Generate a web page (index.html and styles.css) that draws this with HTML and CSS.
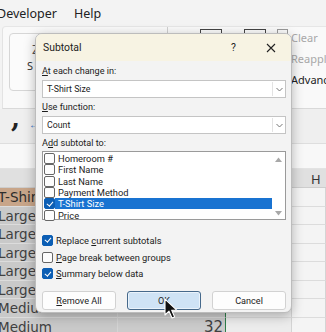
FILE: index.html
```html
<!DOCTYPE html>
<html lang="en">
<head>
  <meta charset="UTF-8">
  <title>Subtotal</title>
  <link rel="stylesheet" href="styles.css">
</head>
<body>

  <div id="excel">
    <div class="tabs">
      <span class="tab dev">Developer</span>
      <span class="tab">Help</span>
    </div>

    <div class="ribbon">
      <div class="sortbox">
        <span class="sort-glyph">Z</span>
        <span class="sort-label">S</span>
      </div>
      <div class="sep"></div>
      <div class="ico wide"></div>
      <div class="ico wide second"></div>
      <div class="ico tiny"></div>
      <div class="cmds">
        <span class="dim">Clear</span>
        <span class="dim">Reapply</span>
        <span>Advanced</span>
      </div>
    </div>

    <div class="numbar">
      <span class="comma">,</span>
      <span class="dec">←</span>
    </div>
    <div class="formula"></div>
    <div class="colhead"><span class="colH">H</span></div>

    <div class="sheet">
      <div class="cell a head">T-Shirt</div><div class="cell b"></div><div class="cell c"></div><div class="cell d"></div>
      <div class="cell a">Large</div><div class="cell b"></div><div class="cell c"></div><div class="cell d"></div>
      <div class="cell a">Large</div><div class="cell b"></div><div class="cell c"></div><div class="cell d"></div>
      <div class="cell a">Large</div><div class="cell b"></div><div class="cell c"></div><div class="cell d"></div>
      <div class="cell a">Large</div><div class="cell b"></div><div class="cell c"></div><div class="cell d"></div>
      <div class="cell a">Large</div><div class="cell b"></div><div class="cell c"></div><div class="cell d"></div>
      <div class="cell a">Medium</div><div class="cell b"></div><div class="cell c"></div><div class="cell d"></div>
      <div class="cell a">Medium</div><div class="cell b num">32</div><div class="cell c"></div><div class="cell d"></div>
    </div>
  </div>

  <div class="dialog">
    <div class="titlebar">
      <span class="title">Subtotal</span>
      <span class="help">?</span>
      <svg class="close" width="10" height="10" viewBox="0 0 10 10">
        <path d="M1 1 L9 9 M9 1 L1 9" stroke="#222" stroke-width="1.1" fill="none"/>
      </svg>
    </div>

    <div class="body">
      <div class="label first"><u>A</u>t each change in:</div>
      <div class="select">
        <span class="value">T-Shirt Size</span>
        <span class="chev"><svg width="7" height="5" viewBox="0 0 7 5"><path d="M0.5 1 L3.5 4 L6.5 1" stroke="#777" fill="none"/></svg></span>
      </div>

      <div class="label"><u>U</u>se function:</div>
      <div class="select">
        <span class="value">Count</span>
        <span class="chev"><svg width="7" height="5" viewBox="0 0 7 5"><path d="M0.5 1 L3.5 4 L6.5 1" stroke="#777" fill="none"/></svg></span>
      </div>

      <div class="label">A<u>d</u>d subtotal to:</div>
      <div class="listbox">
        <div class="items">
          <div class="item"><span class="box"></span><span class="txt">Homeroom #</span></div>
          <div class="item"><span class="box"></span><span class="txt">First Name</span></div>
          <div class="item"><span class="box"></span><span class="txt">Last Name</span></div>
          <div class="item"><span class="box"></span><span class="txt">Payment Method</span></div>
          <div class="item selected"><span class="box on"></span><span class="txt">T-Shirt Size</span></div>
          <div class="item"><span class="box"></span><span class="txt">Price</span></div>
        </div>
        <div class="scroll">
          <svg width="7" height="5" viewBox="0 0 7 5"><path d="M0 5 L3.5 0.5 L7 5 Z" fill="#a8a8a8"/></svg>
          <svg width="7" height="5" viewBox="0 0 7 5"><path d="M0 0 L3.5 4.5 L7 0 Z" fill="#a8a8a8"/></svg>
        </div>
      </div>

      <div class="checks">
        <div class="check"><span class="box on"></span><span>Replace <u>c</u>urrent subtotals</span></div>
        <div class="check"><span class="box"></span><span><u>P</u>age break between groups</span></div>
        <div class="check"><span class="box on"></span><span><u>S</u>ummary below data</span></div>
      </div>

      <div class="buttons">
        <button class="btn"><u>R</u>emove All</button>
        <button class="btn ok">OK</button>
        <button class="btn">Cancel</button>
      </div>
    </div>
  </div>

  <svg class="cursor" width="14" height="22" viewBox="0 0 14 22">
    <path d="M1 1 L1 17 L5 13.2 L8 20 L10.6 18.9 L7.7 12.3 L13 12.3 Z" fill="#111" stroke="#fff" stroke-width="1.1" stroke-linejoin="round"/>
  </svg>

</body>
</html>
```

FILE: styles.css
```css
body {
  margin: 0;
  width: 326px;
  height: 332px;
  overflow: hidden;
  position: relative;
  font-family: Roboto, "Noto Sans", sans-serif;
  background: #f3f3f3;
}

/* excel behind the dialog */
.tabs {
  height: 26px;
  display: flex;
  align-items: center;
  background: #f3f3f3;
  font-family: "Noto Sans", sans-serif;
  font-size: 12.5px;
  color: #222;
}
.tab.dev {
  margin-left: -3px;
}
.tab + .tab {
  margin-left: 17px;
}
.ribbon {
  height: 81px;
  display: flex;
  align-items: flex-start;
  background: #f9f9f9;
  border-top: 1px solid #e6e6e6;
  border-bottom: 1px solid #d9d9d9;
  border-left: 1px solid #e3e3e3;
  margin-left: 2px;
  border-radius: 4px 0 0 0;
  font-family: "Noto Sans", sans-serif;
  font-size: 11px;
}
.sortbox {
  margin: 6px 0 0 6px;
  width: 60px;
  height: 56px;
  border: 1px solid #d6d6d6;
  border-radius: 4px;
  background: #fbfbfb;
  position: relative;
  flex: none;
}
.sort-glyph {
  position: absolute;
  left: 22px;
  top: 6px;
  font-size: 13px;
  color: #555;
}
.sort-label {
  position: absolute;
  left: 17px;
  top: 24px;
  font-size: 11px;
  color: #333;
}
.sep {
  width: 1px;
  height: 14px;
  background: #cfcfcf;
  margin: 0 0 0 96px;
  flex: none;
}
.ico {
  margin-top: 2px;
  height: 10px;
  border: 1.5px solid #444;
  border-bottom: none;
  flex: none;
}
.ico.wide {
  width: 20px;
  margin-left: 32px;
}
.ico.wide.second {
  margin-left: 22px;
}
.ico.tiny {
  width: 9px;
  height: 11px;
  border: 1px solid #999;
  margin-left: 11px;
}
.cmds {
  margin-left: 3px;
  margin-top: 4px;
  display: flex;
  flex-direction: column;
  gap: 8px;
  color: #222;
  flex: none;
  line-height: 13px;
}
.cmds .dim {
  color: #a8a8a8;
}
.numbar {
  height: 34px;
  background: #efefef;
  border-bottom: 1px solid #dedede;
  display: flex;
  align-items: center;
  gap: 9px;
  padding-left: 11px;
}
.comma {
  font-family: "DejaVu Serif", serif;
  font-size: 26px;
  font-weight: bold;
  color: #222;
  margin-top: -16px;
}
.dec {
  font-size: 10px;
  color: #2b6cc4;
  margin-top: -4px;
}
.formula {
  height: 24px;
  background: #f8f8f8;
  border-bottom: 1px solid #e3e3e3;
}
.colhead {
  height: 18px;
  background: #e0e0e0;
  border-bottom: 1px solid #cdcdcd;
  position: relative;
}
.colH {
  position: absolute;
  left: 311px;
  top: 1px;
  font-family: "Noto Sans", sans-serif;
  font-size: 13px;
  color: #333;
}
.sheet {
  display: grid;
  grid-template-columns: 118px 108px 66px 1fr;
  grid-auto-rows: 18.5px;
  font-family: "DejaVu Sans", sans-serif;
  font-size: 13.5px;
  color: #404040;
}
.cell {
  border-bottom: 1px solid #dcdcdc;
  border-right: 1px solid #d4d4d4;
  overflow: hidden;
  white-space: nowrap;
  line-height: 18px;
}
.cell.a {
  background: #c9c9c9;
  margin-left: -2px;
}
.cell.a.head {
  background: #c8a589;
  color: #2d2d2d;
}
.cell.b {
  background: #cbcbcb;
  text-align: right;
  padding-right: 2px;
  border-right: 1.5px solid #2e7d4a;
}
.cell.b.num {
  font-size: 15px;
}
.cell.c {
  background: #ececec;
}
.cell.d {
  background: #f4f4f4;
}

/* the dialog */
.dialog {
  position: absolute;
  left: 35px;
  top: 33px;
  width: 255px;
  height: 278px;
  background: #f3f3f3;
  border: 1px solid #bcbcbc;
  border-radius: 7px;
  box-shadow: 0 3px 12px rgba(0, 0, 0, 0.28);
  overflow: hidden;
  font-size: 9.1px;
  color: #1c1c1c;
}
.titlebar {
  height: 27px;
  background: #f7f3e3;
  display: flex;
  align-items: center;
  padding-left: 7px;
}
.title {
  flex: 1;
  font-size: 10.4px;
}
.help {
  font-size: 10.4px;
  margin-right: 30px;
}
.close {
  margin-right: 15px;
}
.body {
  padding: 2px 5px 0 6px;
}
.label {
  line-height: 13px;
  margin-top: 3px;
}
.label.first {
  margin-top: 2px;
}
.select {
  margin-top: 2px;
  height: 16px;
  background: #fff;
  border: 1px solid #c4c4c4;
  display: flex;
  align-items: center;
}
.select .value {
  flex: 1;
  padding-left: 4px;
  font-size: 8.8px;
}
.chev {
  width: 12px;
  height: 14px;
  border-left: 1px solid #e3e3e3;
  display: flex;
  align-items: center;
  justify-content: center;
}
.listbox {
  margin-top: 1px;
  height: 67px;
  background: #fff;
  border: 1px solid #9a9a9a;
  display: flex;
}
.items {
  flex: 1;
  padding-top: 1px;
  padding-left: 1px;
}
.item {
  height: 11.3px;
  display: flex;
  align-items: center;
  line-height: 11px;
  font-size: 9.3px;
}
.item .txt {
  flex: 1;
  padding-left: 3px;
  height: 11px;
}
.item.selected .txt {
  background: #1973d1;
  color: #fff;
}
.box {
  width: 9px;
  height: 9px;
  border: 1px solid #666;
  border-radius: 2px;
  background: #fdfdfd;
  flex: none;
  position: relative;
}
.box.on {
  background: #0c5eb4;
  border-color: #0c5eb4;
}
.box.on::after {
  content: "";
  position: absolute;
  left: 2.6px;
  top: 0.6px;
  width: 2.5px;
  height: 5px;
  border: solid #fff;
  border-width: 0 1.2px 1.2px 0;
  transform: rotate(40deg);
}
.scroll {
  width: 13px;
  display: flex;
  flex-direction: column;
  justify-content: space-between;
  align-items: center;
  padding: 5px 0 3px;
}
.checks {
  margin-top: 12px;
}
.check {
  height: 16.7px;
  display: flex;
  align-items: center;
  gap: 3px;
  font-size: 9.3px;
}
.buttons {
  margin-top: 9px;
  display: flex;
  gap: 11px;
}
.btn {
  width: 74px;
  height: 19px;
  padding: 0;
  margin: 0;
  background: #fdfdfd;
  border: 1px solid #d2d2d2;
  border-radius: 3px;
  font-family: Roboto, "Noto Sans", sans-serif;
  font-size: 9.1px;
  color: #1c1c1c;
}
.btn.ok {
  background: #cfe3f5;
  border: 1px solid #46698b;
  box-shadow: inset 0 0 0 1px #eaf3fb;
}

.cursor {
  position: absolute;
  left: 164px;
  top: 298px;
}
```
